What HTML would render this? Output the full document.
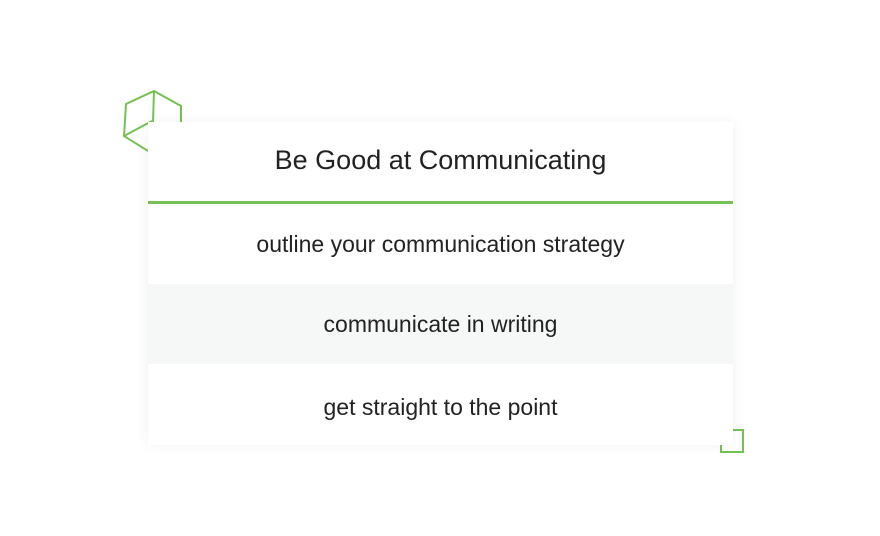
<!DOCTYPE html>
<html><head><style>
body{margin:0;width:880px;height:536px;background:#fff;position:relative;overflow:hidden;font-family:"Liberation Sans",sans-serif;}
.card{position:absolute;left:148px;top:122px;width:585px;height:323px;background:#fff;box-shadow:0 0 12px rgba(0,0,0,0.06);}
.h{height:79px;line-height:77px;text-align:center;font-size:27px;color:#222;border-bottom:3px solid #76c153;}
.r{height:80px;line-height:80px;text-align:center;font-size:23px;color:#222;}
.g{background:#f6f8f7;}
</style></head><body>
<svg style="position:absolute;left:0;top:0" width="880" height="536">
<g fill="none" stroke="#76c153" stroke-width="2">
<polyline points="148,151 124,136 126,104 154,91 181,106 181,122"/>
<line x1="154" y1="91" x2="153" y2="122"/>
<line x1="124" y1="136" x2="152" y2="121"/>
<polyline points="733,430 743,430 743,452 721,452 721,444"/>
</g></svg>
<div class="card">
<div class="h">Be Good at Communicating</div>
<div class="r">outline your communication strategy</div>
<div class="r g">communicate in writing</div>
<div class="r" style="line-height:86px">get straight to the point</div>
</div>
</body></html>
